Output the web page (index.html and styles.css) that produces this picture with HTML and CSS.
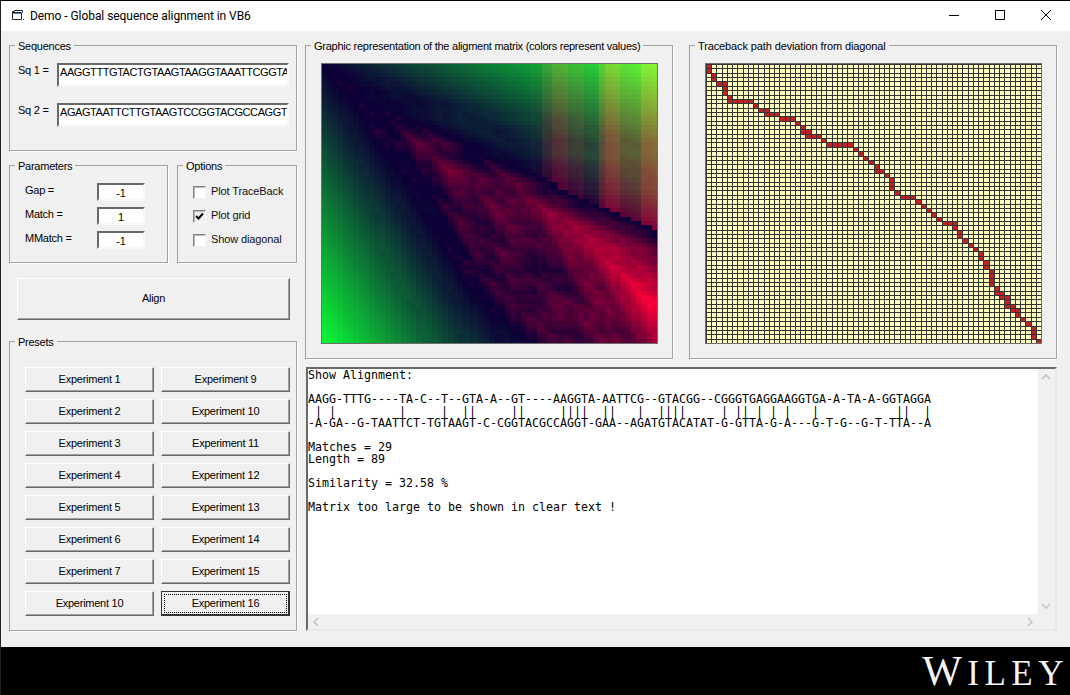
FILE: index.html
```html
<!DOCTYPE html>
<html lang="en">
  <head>
    <meta charset="UTF-8" />
    <title>Demo - Global sequence alignment in VB6</title>
    <link rel="stylesheet" href="styles.css">
  </head>
  <body>
    <div class="window">
      <header class="titlebar">
        <svg class="appicon" width="16" height="16" viewBox="0 0 16 16">
          <path d="M1.5 3.5h2v-1h8v2M1.5 3.5v8h9v-7h-9" fill="none" stroke="#222" />
          <path d="M2 5h8v1H2z" fill="#3a8fd0" />
          <path d="M12 11h1v1h-1z" fill="#222" />
        </svg>
        <span class="titletext">Demo - Global sequence alignment in VB6</span>
        <div class="caption">
          <svg width="46" height="30" viewBox="0 0 46 30"><path d="M18 14.5h10" stroke="#000" /></svg>
          <svg width="46" height="30" viewBox="0 0 46 30"><path d="M18.5 9.5h9v9h-9z" fill="none" stroke="#000" /></svg>
          <svg width="46" height="30" viewBox="0 0 46 30"><path d="M18 9l10 10M28 9L18 19" stroke="#000" fill="none" /></svg>
        </div>
      </header>

      <main class="client">
        <div class="leftcol">
          <fieldset class="group seqgroup">
            <legend>Sequences</legend>
            <div class="seqrow">
              <span class="seqlabel">Sq 1 =</span>
              <div class="textbox seqbox">AAGGTTTGTACTGTAAGTAAGGTAAATTCGGTACGGCGGGTGAGGAAGGTGAATAAGGTAGGA</div>
            </div>
            <div class="seqrow">
              <span class="seqlabel">Sq 2 =</span>
              <div class="textbox seqbox">AGAGTAATTCTTGTAAGTCCGGTACGCCAGGTGAAAGATGTACATATGGTTAGAGTGGTTTAA</div>
            </div>
          </fieldset>

          <div class="midrow">
            <fieldset class="group paramgroup">
              <legend>Parameters</legend>
              <div class="paramrow"><span>Gap =</span><div class="textbox numbox">-1</div></div>
              <div class="paramrow"><span>Match =</span><div class="textbox numbox">1</div></div>
              <div class="paramrow"><span>MMatch =</span><div class="textbox numbox">-1</div></div>
            </fieldset>
            <fieldset class="group optgroup">
              <legend>Options</legend>
              <div class="optrow"><span class="check"></span><span>Plot TraceBack</span></div>
              <div class="optrow">
                <span class="check checked">
                  <svg width="11" height="11" viewBox="0 0 11 11"><path d="M2 5l2.5 2.5L9 2.5" fill="none" stroke="#000" stroke-width="2" /></svg>
                </span>
                <span>Plot grid</span>
              </div>
              <div class="optrow"><span class="check"></span><span>Show diagonal</span></div>
            </fieldset>
          </div>

          <button class="btn alignbtn">Align</button>

          <fieldset class="group presets">
            <legend>Presets</legend>
            <div class="presetgrid">
              <button class="btn">Experiment 1</button>
              <button class="btn">Experiment 9</button>
              <button class="btn">Experiment 2</button>
              <button class="btn">Experiment 10</button>
              <button class="btn">Experiment 3</button>
              <button class="btn">Experiment 11</button>
              <button class="btn">Experiment 4</button>
              <button class="btn">Experiment 12</button>
              <button class="btn">Experiment 5</button>
              <button class="btn">Experiment 13</button>
              <button class="btn">Experiment 6</button>
              <button class="btn">Experiment 14</button>
              <button class="btn">Experiment 7</button>
              <button class="btn">Experiment 15</button>
              <button class="btn">Experiment 10</button>
              <button class="btn focused"><span>Experiment 16</span></button>
            </div>
          </fieldset>
        </div>

        <div class="rightcol">
          <div class="plots">
            <fieldset class="group plotgroup">
              <legend>Graphic representation of the aligment matrix (colors represent values)</legend>
              <canvas id="heatmap" class="plot" width="335" height="279"></canvas>
            </fieldset>
            <fieldset class="group plotgroup">
              <legend class="widelegend">Traceback path deviation from diagonal</legend>
              <canvas id="trace" class="plot" width="335" height="279"></canvas>
            </fieldset>
          </div>

          <div class="output">
            <pre class="outtext">Show Alignment:

AAGG-TTTG----TA-C--T--GTA-A--GT----AAGGTA-AATTCG--GTACGG--CGGGTGAGGAAGGTGA-A-TA-A-GGTAGGA
 | |         |     |  ||     ||     ||||  ||   |  ||||     | || | | |   |           ||  |
-A-GA--G-TAATTCT-TGTAAGT-C-CGGTACGCCAGGT-GAA--AGATGTACATAT-G-GTTA-G-A---G-T-G--G-T-TTA--A

Matches = 29
Length = 89

Similarity = 32.58 %

Matrix too large to be shown in clear text !</pre>
            <div class="vscroll">
              <svg width="16" height="16" viewBox="0 0 16 16"><path d="M4 10l4-4 4 4" class="arrow" /></svg>
              <svg width="16" height="16" viewBox="0 0 16 16"><path d="M4 6l4 4 4-4" class="arrow" /></svg>
            </div>
            <div class="hscroll">
              <svg width="16" height="16" viewBox="0 0 16 16"><path d="M10 4L6 8l4 4" class="arrow" /></svg>
              <svg width="16" height="16" viewBox="0 0 16 16"><path d="M6 4l4 4-4 4" class="arrow" /></svg>
            </div>
          </div>
        </div>
      </main>

      <footer class="brandbar"><span class="wiley"><span class="wileycap">W</span>ILEY</span></footer>
    </div>
    <script src="plots.js"></script>
  </body>
</html>
```

FILE: styles.css
```css
* {
  box-sizing: border-box;
}
html,
body {
  margin: 0;
  height: 100%;
}
body {
  font-family: "Liberation Sans", Arial, sans-serif;
  font-size: 11px;
  letter-spacing: -0.25px;
  color: #000;
  background: #000;
  overflow: hidden;
}
.window {
  width: 1070px;
  height: 695px;
  display: flex;
  flex-direction: column;
  border-left: 1px solid #222;
}
.titlebar {
  height: 30px;
  margin-top: 1px;
  flex: none;
  display: flex;
  align-items: center;
  background: #fff;
  padding-left: 10px;
}
.appicon {
  margin-right: 3px;
}
.titletext {
  font-family: "Roboto", sans-serif;
  font-size: 12px;
  letter-spacing: -0.06px;
}
.caption {
  margin-left: auto;
  display: flex;
  margin-right: 1px;
}
.client {
  height: 616px;
  flex: none;
  display: flex;
  gap: 8px;
  padding: 7px 12px 0 8px;
  background: #f0f0f0;
}

/* group boxes */
.group {
  margin: 0;
  padding: 10px 0 0 0;
  min-width: 0;
  border: 1px solid #a0a0a0;
  box-shadow: 1px 1px 0 #fff;
}
.group legend {
  margin-left: 5px;
  padding: 2px 3px 0;
  line-height: 13px;
}
.group .widelegend {
  letter-spacing: -0.12px;
}
.leftcol {
  width: 288px;
  flex: none;
  display: flex;
  flex-direction: column;
}
.seqgroup {
  height: 113px;
}
.seqrow {
  height: 40px;
  margin-left: 8px;
  display: flex;
  align-items: flex-start;
}
.seqlabel {
  width: 39px;
  padding-top: 1px;
}
.textbox {
  background: #fff;
  border: 2px solid;
  border-color: #696969 #f8f8f8 #f8f8f8 #696969;
  white-space: nowrap;
  overflow: hidden;
}
.seqbox {
  width: 232px;
  height: 24px;
  padding: 1px 0 0 1px;
  letter-spacing: -0.42px;
}
.midrow {
  display: flex;
  gap: 9px;
  margin-top: 7px;
}
.paramgroup {
  width: 159px;
  height: 105px;
}
.paramrow {
  height: 24px;
  margin-left: 15px;
  display: flex;
  align-items: flex-start;
}
.paramrow span {
  width: 72px;
  padding-top: 1px;
}
.numbox {
  width: 48px;
  height: 18px;
  text-align: center;
  line-height: 15px;
  padding-top: 1px;
}
.optgroup {
  width: 120px;
  height: 105px;
  padding-top: 13px;
}
.optrow {
  height: 24px;
  margin-left: 15px;
  display: flex;
  align-items: flex-start;
  gap: 5px;
  line-height: 11px;
  letter-spacing: -0.12px;
  color: #111;
}
.check {
  width: 13px;
  height: 13px;
  background: #fff;
  border: 1px solid;
  border-color: #808080 #f8f8f8 #f8f8f8 #808080;
  box-shadow: inset 1px 1px 0 #bbb;
  display: flex;
}
.checked {
  background: #eee;
}
.check svg {
  display: block;
}

/* buttons */
.btn {
  font: inherit;
  letter-spacing: inherit;
  color: #000;
  margin: 0;
  padding: 0 0 2px;
  background: #f0f0f0;
  border: 1px solid;
  border-color: #fff #696969 #696969 #fff;
  box-shadow: inset -1px -1px 0 #a0a0a0;
}
.alignbtn {
  width: 273px;
  height: 42px;
  margin: 15px 0 0 8px;
}
.presets {
  height: 297px;
  margin-top: 14px;
  padding-top: 18px;
}
.presetgrid {
  display: grid;
  margin-left: 15px;
  grid-template-columns: 129px 129px;
  grid-auto-rows: 25px;
  gap: 7px;
}
.focused {
  border: 1px solid #333;
  border-width: 1px 2px 2px 1px;
  box-shadow: none;
  padding: 2px 1px 1px 2px;
}
.focused span {
  display: flex;
  height: 100%;
  align-items: center;
  justify-content: center;
  padding-bottom: 2px;
  border: 1px dotted #000;
}

/* right side */
.rightcol {
  width: 752px;
  flex: none;
  display: flex;
  flex-direction: column;
}
.plots {
  display: flex;
  gap: 16px;
}
.plotgroup {
  width: 368px;
  height: 321px;
}
.plot {
  display: block;
  width: 337px;
  height: 281px;
  margin-left: 15px;
  border: 1px solid #6e6e6e;
}
.output {
  position: relative;
  width: 751px;
  height: 264px;
  margin: 8px 0 0 1px;
  background: #fff;
  border: 2px solid;
  border-color: #696969 #e8e8e8 #e8e8e8 #696969;
  overflow: hidden;
}
.outtext {
  margin: 0;
  font-family: "DejaVu Sans Mono", monospace;
  font-size: 11.63px;
  line-height: 12px;
  letter-spacing: 0;
}
.vscroll {
  position: absolute;
  top: 0;
  right: 0;
  bottom: 15px;
  width: 17px;
  background: #f0f0f0;
  display: flex;
  flex-direction: column;
  justify-content: space-between;
}
.hscroll {
  position: absolute;
  left: 0;
  right: 0;
  bottom: 0;
  height: 15px;
  padding-right: 17px;
  background: #f0f0f0;
  display: flex;
  justify-content: space-between;
}
.arrow {
  fill: none;
  stroke: #c4c4c4;
  stroke-width: 1.6;
}

/* publisher strip */
.brandbar {
  flex: 1;
  background: #000;
  display: flex;
  justify-content: flex-end;
  align-items: flex-end;
  padding: 0 1px 0 0;
}
.wiley {
  font-family: "Liberation Serif", serif;
  font-size: 35px;
  line-height: 42px;
  letter-spacing: 5.5px;
  color: #f4f4f4;
}
.wileycap {
  font-size: 42px;
}
```

FILE: plots.js
```js
// the two aligned strands, same as in the text box
var top1 = "AAGG-TTTG----TA-C--T--GTA-A--GT----AAGGTA-AATTCG--GTACGG--CGGGTGAGGAAGGTGA-A-TA-A-GGTAGGA";
var top2 = "-A-GA--G-TAATTCT-TGTAAGT-C-CGGTACGCCAGGT-GAA--AGATGTACATAT-G-GTTA-G-A---G-T-G--G-T-TTA--A";
var sq1 = top1.replace(/-/g, "");
var sq2 = top2.replace(/-/g, "");
var N = 64;
var W = 335;
var H = 279;
var CW = W / N;
var CH = H / N;

// extra red per column on the upper right part of the matrix
var stripes = {
  40: 20, 41: 20, 42: 50, 43: 50, 44: 80, 45: 80, 46: 80, 47: 60, 48: 60, 49: 60,
  50: 40, 51: 40, 52: 40, 53: 90, 54: 120, 55: 120, 56: 120,
  57: 90, 58: 90, 59: 90, 60: 90, 61: 130, 62: 130, 63: 130
};

function cellRect(ctx, r, c, inset) {
  var x = Math.round(c * CW);
  var y = Math.round(r * CH);
  var x2 = Math.round((c + 1) * CW);
  var y2 = Math.round((r + 1) * CH);
  ctx.fillRect(x + inset, y + inset, x2 - x - inset, y2 - y - inset);
}

// score matrix, gap = -1, match = 1, mismatch = -1
function scoreMatrix() {
  var f = [];
  for (var i = 0; i < N; i++) {
    f.push([]);
    for (var j = 0; j < N; j++) {
      if (i == 0 || j == 0) {
        f[i][j] = -(i + j);
      } else {
        var d = f[i - 1][j - 1] + (sq2[i - 1] == sq1[j - 1] ? 1 : -1);
        f[i][j] = Math.max(d, f[i - 1][j] - 1, f[i][j - 1] - 1);
      }
    }
  }
  return f;
}

function drawHeat() {
  var ctx = document.getElementById("heatmap").getContext("2d");
  var f = scoreMatrix();
  var hi = 1;
  for (var i = 0; i < N; i++) for (var j = 0; j < N; j++) hi = Math.max(hi, f[i][j]);
  for (i = 0; i < N; i++) {
    for (j = 0; j < N; j++) {
      var v = f[i][j];
      var r = v > 0 ? (v / hi) * 250 : 12;
      var g = v < 0 ? (-v / 65) * 255 : 0;
      if (v < 0 && stripes[j] && i < 27 + (j - 41) * 0.5) r = stripes[j];
      ctx.fillStyle = "rgb(" + Math.round(r) + "," + Math.round(g) + ",54)";
      cellRect(ctx, i, j, 0);
    }
  }
}

function drawTrace() {
  var ctx = document.getElementById("trace").getContext("2d");
  ctx.fillStyle = "#ffffc0";
  ctx.fillRect(0, 0, W, H);
  // grid lines
  ctx.fillStyle = "#333";
  for (var c = 0; c <= N; c++) ctx.fillRect(Math.round(c * CW), 0, 1, H);
  for (var r = 0; r <= N; r++) ctx.fillRect(0, Math.round(r * CH), W, 1);
  // path cells
  ctx.fillStyle = "#c02026";
  var i = 0;
  var j = 0;
  cellRect(ctx, 0, 0, 1);
  for (var k = 0; k < top1.length; k++) {
    if (top1[k] != "-") i++;
    if (top2[k] != "-") j++;
    cellRect(ctx, i, j, 1);
  }
}

drawHeat();
drawTrace();
```
